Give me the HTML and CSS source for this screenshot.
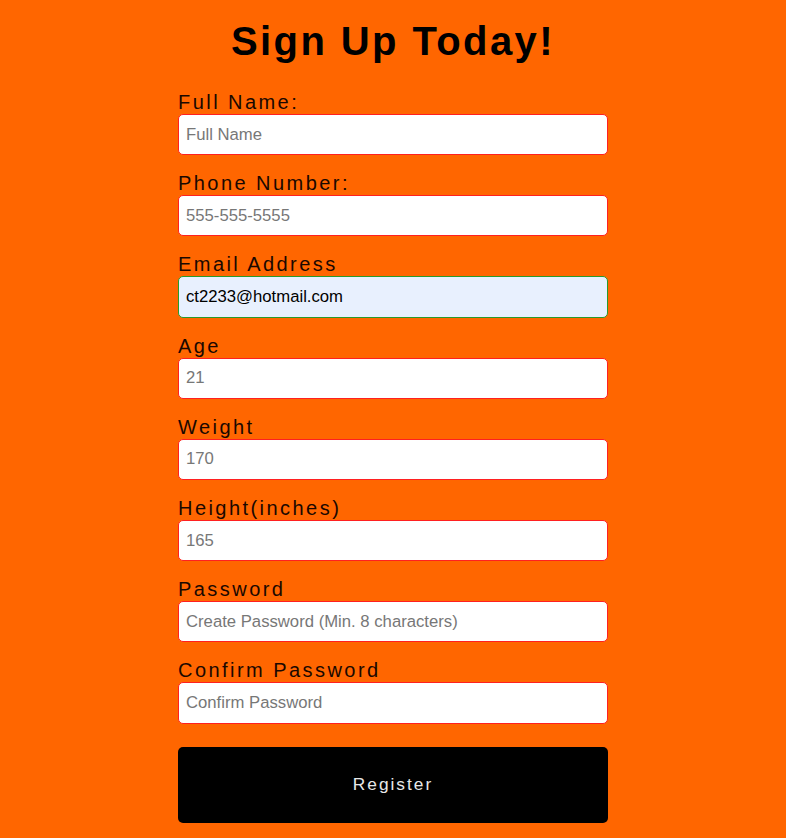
FILE: index.html
```html
<!DOCTYPE html>
<html>
<head>
<meta charset="utf-8">
<link rel="stylesheet" href="styles.css">
</head>
<body>
<h1 class="title">Sign Up Today!</h1>
<form class="form">
  <div class="field">
    <label class="label">Full Name:</label>
    <input class="input" type="text" placeholder="Full Name">
  </div>
  <div class="field">
    <label class="label">Phone Number:</label>
    <input class="input" type="text" placeholder="555-555-5555">
  </div>
  <div class="field">
    <label class="label">Email Address</label>
    <input class="input input-filled" type="text" value="ct2233@hotmail.com">
  </div>
  <div class="field">
    <label class="label">Age</label>
    <input class="input" type="text" placeholder="21">
  </div>
  <div class="field">
    <label class="label">Weight</label>
    <input class="input" type="text" placeholder="170">
  </div>
  <div class="field">
    <label class="label">Height(inches)</label>
    <input class="input" type="text" placeholder="165">
  </div>
  <div class="field">
    <label class="label">Password</label>
    <input class="input" type="password" placeholder="Create Password (Min. 8 characters)">
  </div>
  <div class="field">
    <label class="label">Confirm Password</label>
    <input class="input" type="password" placeholder="Confirm Password">
  </div>
  <button class="button" type="button">Register</button>
</form>
</body>
</html>
```
FILE: styles.css
```css
html, body {
  margin: 0;
  padding: 0;
  background: #ff6600;
}
body {
  font-family: "Liberation Sans", Arial, sans-serif;
}
.title {
  margin: 18px 0 0;
  text-align: center;
  font-size: 40px;
  line-height: 46px;
  font-weight: bold;
  letter-spacing: 2.4px;
  color: #000;
}
.form {
  width: 430px;
  margin: 27px auto 0;
  display: flex;
  flex-direction: column;
}
.field {
  display: flex;
  flex-direction: column;
  margin-bottom: 17px;
}
.label {
  font-size: 20px;
  line-height: 23px;
  letter-spacing: 2.45px;
  color: #1a0800;
}
.input {
  box-sizing: border-box;
  height: 41.2px;
  width: 100%;
  margin: 0;
  padding: 0 7px;
  border: 1px solid #ff2020;
  border-radius: 5px;
  background: #fff;
  font-family: "Liberation Sans", Arial, sans-serif;
  font-size: 16.7px;
  color: #000;
  outline: none;
}
.input::placeholder {
  color: #777;
}
.input-filled {
  background: #e8f0fe;
  border-color: #2a9a2a;
}
.button {
  margin-top: 6px;
  height: 76px;
  width: 100%;
  border: none;
  border-radius: 5px;
  background: #000;
  color: #e8e8e8;
  font-family: "Liberation Sans", Arial, sans-serif;
  font-size: 17.3px;
  letter-spacing: 2px;
  cursor: pointer;
}
```
